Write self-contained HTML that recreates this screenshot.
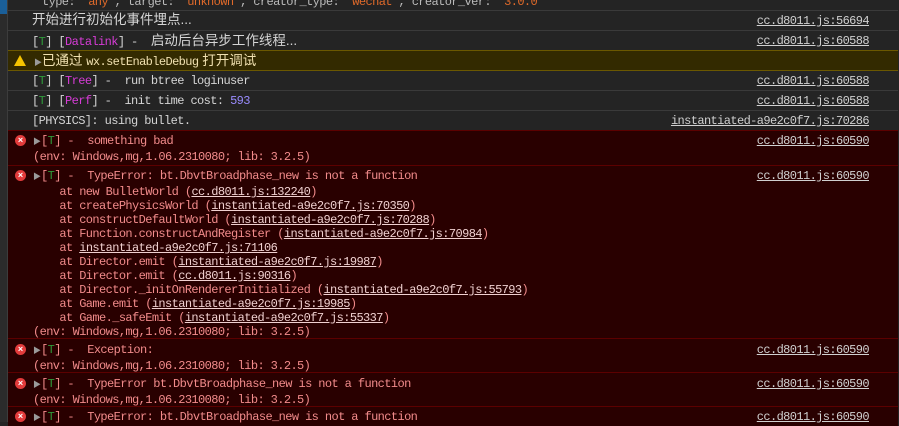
<!DOCTYPE html>
<html><head><meta charset="utf-8"><style>
*{margin:0;padding:0;box-sizing:border-box}
body{width:899px;height:422px;overflow:hidden;background:#242424;font-family:"Liberation Mono","Noto Sans CJK SC",monospace;font-size:12px;letter-spacing:-0.6px;color:#d5d5d5;position:relative}
.strip{position:absolute;left:0;top:0;width:8px;height:422px;background:#2b2b2b;border-right:1px solid #3c3c3c}
.strip .b{position:absolute;left:0;top:0;width:7px;height:14px;background:#1a5f99}
.row{position:absolute;left:8px;width:890px;border-top:1px solid #3a3a3a}
.t{position:absolute;white-space:pre;line-height:14px}
.lk{position:absolute;right:29px;white-space:pre;text-decoration:underline;color:#d0d0d0;line-height:14px}
.warn{background:#332a00;border-top:1px solid #6b5800;border-bottom:1px solid #6b5800;color:#f0e0b0}
.err{background:#290000;border-top:1px solid #5c0000;color:#f28b8b}
.err u{color:#f0d0d0}
.g{color:#2f9a3a}.m{color:#d73cd7}.n{color:#9a8cff}
.cn{font-family:"Liberation Sans","Noto Sans CJK SC",sans-serif;font-size:13.5px;letter-spacing:0}
.ic{position:absolute;left:7px;width:11px;height:11px;border-radius:50%;background:#e23b3b;color:#fff;font-size:9px;line-height:11px;text-align:center;font-family:"Liberation Sans",sans-serif;font-weight:bold;letter-spacing:0}
.ar{color:#9a9a9a;font-size:8px;letter-spacing:0}
</style></head><body>
<div class="strip"><div class="b"></div></div>
<div class="row" style="top:-4px;height:14px"><div class="t" style="left:34px;top:-2px;color:#bbb">type: <span style="color:#e06a2a">"any"</span>, target: <span style="color:#e06a2a">"unknown"</span>, creator_type: <span style="color:#e06a2a">"wechat"</span>, creator_ver: <span style="color:#e06a2a">"3.0.0"</span></div></div>
<div class="row" style="top:10px;height:20px"><div class="t cn" style="left:24px;top:2px">开始进行初始化事件埋点...</div><div class="lk" style="top:3px">cc.d8011.js:56694</div></div>
<div class="row" style="top:30px;height:20px"><div class="t" style="left:24px;top:3px">[<span class="g">T</span>] [<span class="m">Datalink</span>] -  <span class="cn">启动后台异步工作线程...</span></div><div class="lk" style="top:3px">cc.d8011.js:60588</div></div>
<div class="row warn" style="top:50px;height:21px"><div style="position:absolute;left:6px;top:4px;width:0;height:0;border-left:6px solid transparent;border-right:6px solid transparent;border-bottom:11px solid #f5c400"></div><div class="t" style="left:26px;top:3px"><span class="ar">▶</span><span class="cn">已通过 </span>wx.setEnableDebug<span class="cn"> 打开调试</span></div></div>
<div class="row" style="top:70px;height:20px;border-top:none"><div class="t" style="left:24px;top:4px">[<span class="g">T</span>] [<span class="m">Tree</span>] -  run btree loginuser</div><div class="lk" style="top:4px">cc.d8011.js:60588</div></div>
<div class="row" style="top:90px;height:20px"><div class="t" style="left:24px;top:3px">[<span class="g">T</span>] [<span class="m">Perf</span>] -  init time cost: <span class="n">593</span></div><div class="lk" style="top:3px">cc.d8011.js:60588</div></div>
<div class="row" style="top:110px;height:20px"><div class="t" style="left:24px;top:3px">[PHYSICS]: using bullet.</div><div class="lk" style="top:3px">instantiated-a9e2c0f7.js:70286</div></div>
<div class="row err" style="top:130px;height:35px"><div class="ic" style="top:4px">×</div><div class="t" style="left:25px;top:3px"><span class="ar">▶</span>[<span class="g">T</span>] -  something bad
(env: Windows,mg,1.06.2310080; lib: 3.2.5)</div><div class="lk" style="top:3px">cc.d8011.js:60590</div></div>
<div class="row err" style="top:165px;height:173px"><div class="ic" style="top:4px">×</div><div class="t" style="left:25px;top:3px"><span class="ar">▶</span>[<span class="g">T</span>] -  TypeError: bt.DbvtBroadphase_new is not a function
    at new BulletWorld (<u>cc.d8011.js:132240</u>)
    at createPhysicsWorld (<u>instantiated-a9e2c0f7.js:70350</u>)
    at constructDefaultWorld (<u>instantiated-a9e2c0f7.js:70288</u>)
    at Function.constructAndRegister (<u>instantiated-a9e2c0f7.js:70984</u>)
    at <u>instantiated-a9e2c0f7.js:71106</u>
    at Director.emit (<u>instantiated-a9e2c0f7.js:19987</u>)
    at Director.emit (<u>cc.d8011.js:90316</u>)
    at Director._initOnRendererInitialized (<u>instantiated-a9e2c0f7.js:55793</u>)
    at Game.emit (<u>instantiated-a9e2c0f7.js:19985</u>)
    at Game._safeEmit (<u>instantiated-a9e2c0f7.js:55337</u>)
(env: Windows,mg,1.06.2310080; lib: 3.2.5)</div><div class="lk" style="top:3px">cc.d8011.js:60590</div></div>
<div class="row err" style="top:338px;height:34px"><div class="ic" style="top:5px">×</div><div class="t" style="left:25px;top:4px"><span class="ar">▶</span>[<span class="g">T</span>] -  Exception:
(env: Windows,mg,1.06.2310080; lib: 3.2.5)</div><div class="lk" style="top:4px">cc.d8011.js:60590</div></div>
<div class="row err" style="top:372px;height:34px"><div class="ic" style="top:5px">×</div><div class="t" style="left:25px;top:4px"><span class="ar">▶</span>[<span class="g">T</span>] -  TypeError bt.DbvtBroadphase_new is not a function
(env: Windows,mg,1.06.2310080; lib: 3.2.5)</div><div class="lk" style="top:4px">cc.d8011.js:60590</div></div>
<div class="row err" style="top:406px;height:20px"><div class="ic" style="top:4px">×</div><div class="t" style="left:25px;top:3px"><span class="ar">▶</span>[<span class="g">T</span>] -  TypeError: bt.DbvtBroadphase_new is not a function</div><div class="lk" style="top:3px">cc.d8011.js:60590</div></div>
</body></html>
